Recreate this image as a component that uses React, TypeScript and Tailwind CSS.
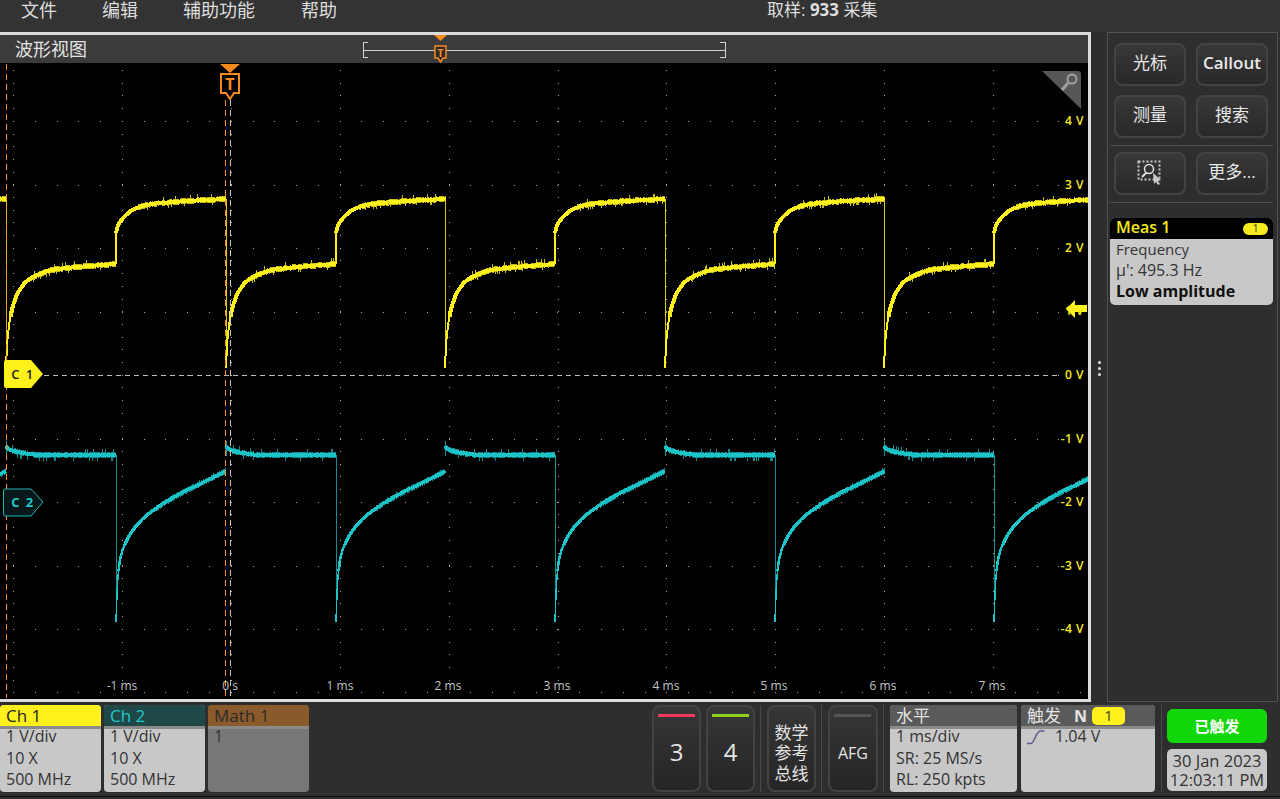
import type { ReactNode } from 'react'

const STARTS = [-213.5, 6, 226, 445, 665, 884]

type Pt = [number, number]

const ch1Low: Pt[] = [[0, 368], [1, 345], [2, 333], [4, 318], [7, 303], [10, 296], [14, 287], [24, 278], [44, 270], [70, 267], [110, 264]]
const ch1High: Pt[] = [[110, 233], [112, 225], [119, 215], [129, 208], [144, 204], [180, 201], [219.5, 199]]
const ch2Flat: Pt[] = [[0, 446], [2, 449], [10, 452], [30, 455], [110, 455]]
const ch2Curve: Pt[] = [[110, 622], [111, 593], [112, 573], [114, 558], [117, 547], [122, 537], [128, 528], [136, 519], [146, 511], [161, 501], [177, 492], [194, 484], [219.5, 471]]

function interp(pts: Pt[], t: number) {
  if (t <= pts[0][0]) return pts[0][1]
  for (let i = 1; i < pts.length; i++) {
    if (t <= pts[i][0]) {
      const [a, b] = [pts[i - 1], pts[i]]
      return a[1] + ((b[1] - a[1]) * (t - a[0])) / (b[0] - a[0])
    }
  }
  return pts[pts.length - 1][1]
}

// resample the table at 1px and average a little so no kinks show
function smooth(pts: Pt[]) {
  const a = pts[0][0]
  const b = pts[pts.length - 1][0]
  const out: Pt[] = []
  for (let t = a; t <= b; t += t - a < 6 ? 0.5 : 1) {
    const w = Math.min(5, (t - a) * 0.4, b - t)
    const y = (interp(pts, t - w) + interp(pts, t) + interp(pts, t + w)) / 3
    out.push([t, y])
  }
  out.push(pts[pts.length - 1])
  return out
}

const low = smooth(ch1Low)
const high = smooth(ch1High)
const flat = smooth(ch2Flat)
const curve = smooth(ch2Curve)

function line(pts: Pt[], x0: number) {
  return pts.map((p, i) => `${i ? 'L' : 'M'}${(x0 + p[0]).toFixed(1)} ${p[1].toFixed(1)}`).join(' ')
}

// part of a trace, from t to t, so the steep start can be drawn thinner
function part(pts: Pt[], x0: number, from: number, to: number) {
  return line(pts.filter((p) => p[0] >= from && p[0] <= to), x0)
}

// fixed pseudo noise so the trace has the same fuzz every time
function spikes(pts: Pt[], x0: number, seed: number, from: number, up: number, down: number) {
  let s = seed
  let d = ''
  const to = pts[pts.length - 1][0]
  for (let t = pts[0][0] + from; t < to; t += 1) {
    s = (s * 9301 + 49297) % 233280
    const r = s / 233280
    if (r > 0.75) continue
    const y = interp(pts, t)
    const u = r < 0.07 ? up : 3
    const v = r > 0.66 ? down : 3
    d += `M${Math.round(x0 + t)} ${(y - u).toFixed(0)}V${(y + v).toFixed(0)}`
  }
  return d
}

function gridDots() {
  let d = ''
  const rows = [121, 184.5, 248, 311.5, 375, 438.5, 502, 565.5, 629, 692]
  for (const y of rows) {
    for (let x = 13; x < 1086; x += 21.78) d += `M${Math.round(x)} ${Math.round(y)}h1`
  }
  for (let c = 0; c < 10; c++) {
    const x = Math.round(13 + 108.9 * c)
    for (let y = 70; y < 697; y += 12.7) d += `M${x} ${Math.round(y)}h1`
  }
  return d
}

function Traces() {
  return (
    <svg className="absolute inset-0 h-[636px] w-[1088px]" viewBox="0 63 1088 636">
      <path d={gridDots()} stroke="#a8a8a8" strokeWidth={1} shapeRendering="crispEdges" fill="none" />
      {STARTS.map((x0, i) => (
        <g key={x0} fill="none" shapeRendering="crispEdges">
          <path d={`M${x0} 199V368`} stroke="#d8cc10" strokeWidth={1} />
          <path d={`M${x0 + 110} 264V233`} stroke="#ffee1a" strokeWidth={1.5} />
          <path d={spikes(low, x0, 17 + i * 31, 25, 6, 5)} stroke="#c9bc12" strokeWidth={1} />
          <path d={spikes(high, x0, 91 + i * 13, 22, 6, 5)} stroke="#c9bc12" strokeWidth={1} />
          <path d={part(low, x0, 0, 5)} stroke="#fff21c" strokeWidth={2} />
          <path d={part(low, x0, 4.5, 110)} stroke="#fff21c" strokeWidth={4} />
          <path d={line(high, x0)} stroke="#fff21c" strokeWidth={4} />
          <path d={`M${x0 + 110} 455V622`} stroke="#158f92" strokeWidth={1} />
          <path d={`M${x0} 441V456`} stroke="#158f92" strokeWidth={1} />
          <path d={spikes(flat, x0, 47 + i * 19, 4, 6, 6)} stroke="#108a8e" strokeWidth={1} />
          <path d={spikes(curve, x0, 73 + i * 7, 40, 4, 3)} stroke="#108a8e" strokeWidth={1} />
          <path d={line(flat, x0)} stroke="#1cc3c7" strokeWidth={4} />
          <path d={part(curve, x0, 110, 113)} stroke="#1cc3c7" strokeWidth={1.5} />
          <path d={part(curve, x0, 112.5, 120)} stroke="#1cc3c7" strokeWidth={2.5} />
          <path d={part(curve, x0, 119, 219.5)} stroke="#1cc3c7" strokeWidth={3.5} />
        </g>
      ))}
      <path d="M44 375.5H1058" stroke="#bdbdbd" strokeWidth={1} strokeDasharray="5 4" shapeRendering="crispEdges" />
      <path d="M6.5 64V698" stroke="#f5901e" strokeWidth={1} strokeDasharray="6 4" shapeRendering="crispEdges" />
      <path d="M225.5 100V698" stroke="#f5901e" strokeWidth={1} strokeDasharray="6 4" shapeRendering="crispEdges" />
      <path d="M230.5 100V698" stroke="#c4c4c4" strokeWidth={1} strokeDasharray="6 4" shapeRendering="crispEdges" />

      {/* trigger marker */}
      <path d="M220 64H240L230 73Z" fill="#f58a1f" />
      <path d="M221 74H239V93H234L230 99L226 93H221Z" fill="#000" stroke="#f58a1f" strokeWidth={2} />
      <text x="230" y="90" textAnchor="middle" fontSize="16" fontWeight="700" fill="#f58a1f" fontFamily="'Open Sans',sans-serif">T</text>

      {/* zoom corner */}
      <path d="M1042 71H1078Q1081 71 1081 74V109Z" fill="#565656" />
      <circle cx="1072" cy="79" r="4.5" fill="none" stroke="#a0a0a0" strokeWidth={2} />
      <path d="M1068 83L1062 90" stroke="#a0a0a0" strokeWidth={3} />

      {/* ch1 level arrow */}
      <path d="M1066 309L1075 300V305H1087V312H1075V318Z" fill="#fff21c" />

      {/* channel badges */}
      <path d="M6 360H31L43 374L31 388H6Q4 388 4 386V362Q4 360 6 360Z" fill="#fff21c" />
      <path d="M5 489H31L43 502L31 516H5Q3.5 516 3.5 514V491Q3.5 489 5 489Z" fill="#06181a" stroke="#1fb4b8" strokeWidth={1} />
      <text x="23" y="379" textAnchor="middle" fontSize="13" fontWeight="600" letterSpacing="1.5" fill="#222" fontFamily="'Open Sans',sans-serif">C 1</text>
      <text x="23" y="507" textAnchor="middle" fontSize="13" fontWeight="700" letterSpacing="1.5" fill="#1fc9cd" fontFamily="'Open Sans',sans-serif">C 2</text>
    </svg>
  )
}

const voltLabels = [
  ['4 V', 121], ['3 V', 185], ['2 V', 248], ['1 V', 311], ['0 V', 375], ['-1 V', 439], ['-2 V', 502], ['-3 V', 566], ['-4 V', 629],
] as const

const timeLabels = [
  ['-1 ms', 122], ['0 s', 230], ['1 ms', 340], ['2 ms', 448], ['3 ms', 557], ['4 ms', 666], ['5 ms', 774], ['6 ms', 883], ['7 ms', 992],
] as const

function Plot() {
  return (
    <div className="relative h-[636px] overflow-hidden bg-black">
      <Traces />
      {voltLabels.map(([text, y]) => (
        <span
          key={text}
          className="absolute right-[4px] text-[12px] leading-[14px] font-semibold tracking-[0.5px] text-[#f5ea1e]"
          style={{ top: y - 63 - 7 }}
        >
          {text}
        </span>
      ))}
      {timeLabels.map(([text, x]) => (
        <span
          key={text}
          className="absolute top-[616px] -translate-x-1/2 text-[12px] leading-[14px] whitespace-nowrap text-[#c4c4c4]"
          style={{ left: x }}
        >
          {text}
        </span>
      ))}
    </div>
  )
}

function TitleBar() {
  return (
    <div className="flex h-[28px] items-center bg-[#3b3b3b] pl-[15px] text-[18px] text-[#e2e2e2]">
      <span>波形视图</span>
      <svg className="ml-[274px] h-[28px] w-[366px]" viewBox="0 35 366 28">
        <path d="M7 42H2V57H7M2 50H364M359 42H364V57H359" fill="none" stroke="#cfcfcf" strokeWidth={1} shapeRendering="crispEdges" />
        <path d="M73 35H86L79.5 41Z" fill="#f58a1f" />
        <path d="M74 46H85V58H82L79.5 62L77 58H74Z" fill="#2b2b2b" stroke="#f58a1f" strokeWidth={1.5} />
        <text x="79.5" y="56.5" textAnchor="middle" fontSize="11" fontWeight="700" fill="#f58a1f" fontFamily="'Open Sans',sans-serif">T</text>
      </svg>
    </div>
  )
}

function SideButton({ children }: { children: ReactNode }) {
  return (
    <div className="flex h-[43px] w-[72px] items-center justify-center rounded-[8px] border-2 border-[#454341] bg-gradient-to-b from-[#383838] to-[#292929] pb-[4px] text-[17px] text-[#e8e8e8]">
      {children}
    </div>
  )
}

function SidePanel() {
  return (
    <div className="h-[670px] w-[171px] border border-[#55514d] pt-[10px]">
      <div className="grid grid-cols-[72px_72px] gap-x-[10px] gap-y-[9px] pl-[6px]">
        <SideButton>光标</SideButton>
        <SideButton><span className="font-semibold">Callout</span></SideButton>
        <SideButton>测量</SideButton>
        <SideButton>搜索</SideButton>
      </div>
      <div className="mx-[2px] mt-[7px] h-px w-[163px] bg-[#55514d]" />
      <div className="mt-[6px] grid grid-cols-[72px_72px] gap-x-[10px] pl-[6px]">
        <SideButton>
          <svg width="28" height="28" viewBox="0 0 28 28" fill="none">
            <rect x="2.5" y="3.5" width="21" height="18" stroke="#c9c9c9" strokeWidth={2} strokeDasharray="2 2" />
            <circle cx="13" cy="11" r="4.5" stroke="#e2e2e2" strokeWidth={1.5} />
            <path d="M10 15L6 19" stroke="#e2e2e2" strokeWidth={2} />
            <path d="M17 15L25 22L22 23L24 26L22 27L20 24L18 26Z" fill="#c9c9c9" />
          </svg>
        </SideButton>
        <SideButton>更多...</SideButton>
      </div>
      <div className="mx-[2px] mt-[7px] h-px w-[163px] bg-[#55514d]" />
      <div className="mx-[2px] mt-[15px] h-[87px] w-[163px] overflow-hidden rounded-[5px] bg-[#c8c8c8]">
        <div className="flex h-[21px] items-center justify-between bg-black pr-[5px] pb-[3px] pl-[6px] text-[16px] font-semibold text-[#f5ea1e]">
          <span>Meas 1</span>
          <span className="mt-[3px] flex h-[12px] w-[25px] items-center justify-center rounded-[6px] bg-[#f5ea1e] text-[10px] font-normal text-[#333]">1</span>
        </div>
        <div className="pl-[6px] text-[15px] leading-[21px] text-[#333]">
          <div>Frequency</div>
          <div className="text-[16px]">µ': 495.3 Hz</div>
          <div className="text-[16px] font-bold text-[#111]">Low amplitude</div>
        </div>
      </div>
    </div>
  )
}

function Tile({ title, head, titleColor, width, body, muted, extra }: {
  title: string
  head: string
  titleColor: string
  width: string
  body: ReactNode
  muted?: boolean
  extra?: ReactNode
}) {
  return (
    <div className={`h-[87px] ${width} overflow-hidden rounded-[4px] ${muted ? 'bg-[#777777]' : 'bg-[#c8c8c8]'}`}>
      <div className={`flex h-[21px] items-center pl-[6px] text-[17px] ${head} ${titleColor}`}>
        <span>{title}</span>
        {extra}
      </div>
      <div className="h-[3px] bg-[#8a8a8a]" />
      <div className="relative -mt-[3px] pl-[6px] text-[16px] leading-[21.5px] text-[#333]">{body}</div>
    </div>
  )
}

function Rows({ rows }: { rows: string[] }) {
  return (
    <>
      {rows.map((r) => (
        <div key={r} className="whitespace-nowrap">{r}</div>
      ))}
    </>
  )
}

function Sep() {
  return <div className="mr-[6px] ml-[5px] h-[87px] w-px bg-[#4c4a48]" />
}

function ChannelButton({ bar, width, children }: { bar: string; width: string; children: ReactNode }) {
  return (
    <div className={`relative flex h-[87px] ${width} items-center justify-center rounded-[8px] border-2 border-[#454341] bg-gradient-to-b from-[#363636] to-[#262626] text-[#e4e4e4]`}>
      <div className={`absolute top-[7px] left-[4px] h-[3px] w-[37px] ${bar}`} />
      {children}
    </div>
  )
}

export default function App() {
  return (
    <div className="h-[799px] w-[1280px] overflow-hidden bg-[#2e2e2e] font-['Open_Sans','Noto_Sans_CJK_SC',sans-serif]">
      <div className="flex h-[32px] items-start gap-[45px] bg-[#333333] pl-[21px] text-[18px] leading-[20px] text-[#dedede]">
        <span>文件</span>
        <span>编辑</span>
        <span>辅助功能</span>
        <span className="ml-[1px]">帮助</span>
        <span className="ml-[385px] text-[17px] whitespace-pre">
          取样: <b className="font-bold">933</b> 采集
        </span>
      </div>

      <div className="flex h-[670px]">
        <div className="h-[670px] w-[1091px] border-y-[3px] border-r-[3px] border-[#dcdcdc]">
          <TitleBar />
          <Plot />
        </div>
        <div className="flex w-[16px] flex-col items-center gap-[3px] pt-[329px] pl-[1px]">
          <span className="h-[3px] w-[3px] rounded-full bg-[#e0e0e0]" />
          <span className="h-[3px] w-[3px] rounded-full bg-[#e0e0e0]" />
          <span className="h-[3px] w-[3px] rounded-full bg-[#e0e0e0]" />
        </div>
        <SidePanel />
      </div>

      <div className="flex h-[94px] items-start pt-[3px]">
        <div className="flex gap-[3px]">
          <Tile title="Ch 1" head="bg-[#fff21c]" titleColor="text-[#222]" width="w-[101px]" body={<Rows rows={['1 V/div', '10 X', '500 MHz']} />} />
          <Tile title="Ch 2" head="bg-[#1f4848]" titleColor="text-[#1fc9cd]" width="w-[101px]" body={<Rows rows={['1 V/div', '10 X', '500 MHz']} />} />
          <Tile title="Math 1" head="bg-[#8a5a2b]" titleColor="text-[#2a2a2a]" width="w-[101px]" muted body={<Rows rows={['1']} />} />
        </div>
        <div className="ml-[343px] flex gap-[5px]">
          <ChannelButton bar="bg-[#f0385a]" width="w-[49px]"><span className="mt-[6px] text-[24px]">3</span></ChannelButton>
          <ChannelButton bar="bg-[#8ed11c]" width="w-[49px]"><span className="mt-[6px] text-[24px]">4</span></ChannelButton>
        </div>
        <Sep />
        <div className="flex h-[87px] w-[49px] flex-col items-center justify-center rounded-[8px] border-2 border-[#454341] bg-gradient-to-b from-[#363636] to-[#262626] pt-[10px] text-[17px] leading-[20.5px] text-[#e4e4e4]">
          <span>数学</span>
          <span>参考</span>
          <span>总线</span>
        </div>
        <Sep />
        <ChannelButton bar="bg-[#555555]" width="w-[50px]"><span className="mt-[8px] text-[16px]">AFG</span></ChannelButton>
        <Sep />
        <div className="flex gap-[4px]">
          <Tile title="水平" head="bg-[#5a5a5a]" titleColor="text-[#e4e4e4]" width="w-[127px]" body={<Rows rows={['1 ms/div', 'SR: 25 MS/s', 'RL: 250 kpts']} />} />
          <Tile
            title="触发"
            head="bg-[#5a5a5a]"
            titleColor="text-[#e4e4e4]"
            width="w-[134px]"
            extra={
              <>
                <b className="ml-[13px] text-[16px] font-bold">N</b>
                <span className="ml-[5px] flex h-[18px] w-[33px] items-center justify-center rounded-[5px] bg-[#fff21c] text-[14px] text-[#333]">1</span>
              </>
            }
            body={
              <div className="flex items-center">
                <svg width="20" height="16" viewBox="0 0 20 16" className="mr-[9px] -ml-[1px]" fill="none">
                  <path d="M1 14.5H5C8 14.5 10 3 14 2H18.5" stroke="#5b5a94" strokeWidth={1.5} />
                </svg>
                <span>1.04 V</span>
              </div>
            }
          />
        </div>
        <div className="mr-[5px] ml-[6px] h-[87px] w-px bg-[#4c4a48]" />
        <div className="flex flex-col gap-[6px] pt-[4px]">
          <div className="flex h-[34px] w-[100px] items-center justify-center rounded-[6px] bg-[#12d80a] text-[15px] font-semibold text-white">已触发</div>
          <div className="flex h-[42px] w-[100px] flex-col items-center justify-center rounded-[5px] bg-[#c8c8c8] text-[16.5px] leading-[19px] text-[#333]">
            <span>30 Jan 2023</span>
            <span className="whitespace-nowrap">12:03:11 PM</span>
          </div>
        </div>
      </div>
      <div className="h-[1px] bg-[#111]" />
    </div>
  )
}
